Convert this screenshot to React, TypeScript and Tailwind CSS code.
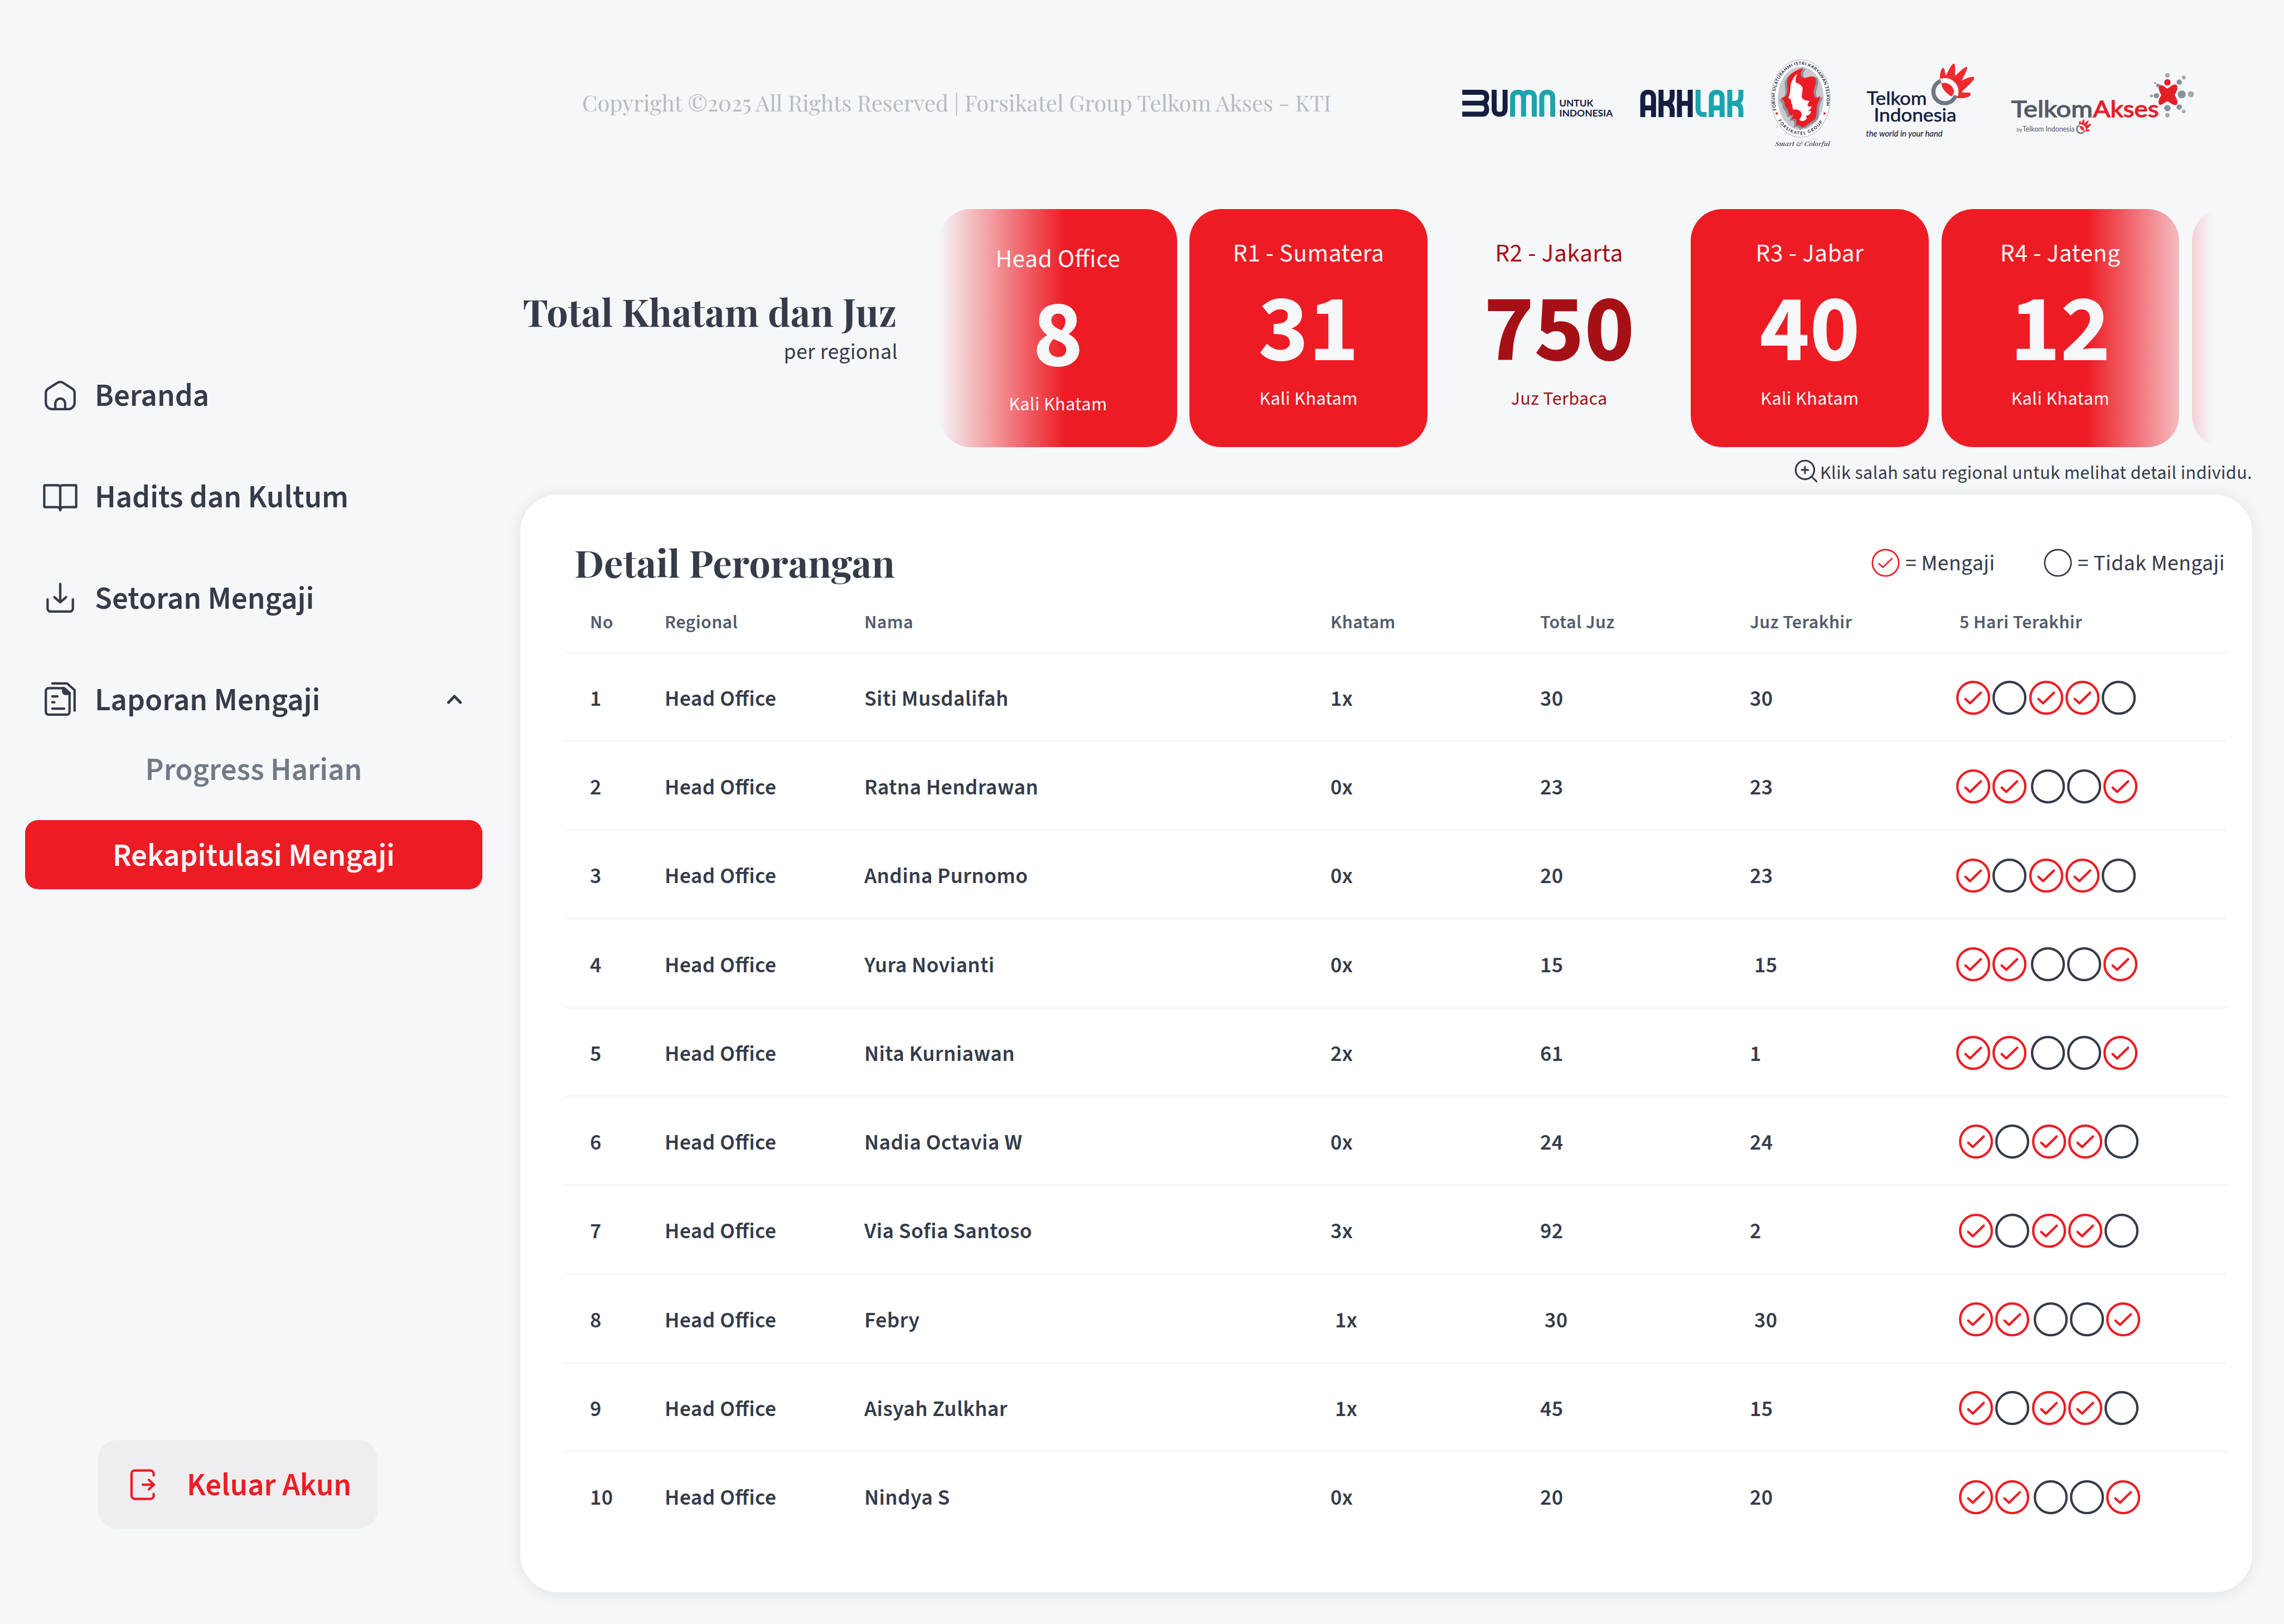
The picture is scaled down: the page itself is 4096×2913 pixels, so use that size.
import type { ReactNode } from "react";

type Day = 0 | 1;

type Row = {
  name: string;
  khatam: string;
  total: string;
  last: string;
  days: Day[];
  nudgeKhatam?: boolean;
  nudgeTotal?: boolean;
  nudgeLast?: boolean;
};

const A: Day[] = [1, 0, 1, 1, 0];
const B: Day[] = [1, 1, 0, 0, 1];

const rows: Row[] = [
  { name: "Siti Musdalifah", khatam: "1x", total: "30", last: "30", days: A },
  { name: "Ratna Hendrawan", khatam: "0x", total: "23", last: "23", days: B },
  { name: "Andina Purnomo", khatam: "0x", total: "20", last: "23", days: A },
  { name: "Yura Novianti", khatam: "0x", total: "15", last: "15", days: B, nudgeLast: true },
  { name: "Nita Kurniawan", khatam: "2x", total: "61", last: "1", days: B },
  { name: "Nadia Octavia W", khatam: "0x", total: "24", last: "24", days: A },
  { name: "Via Sofia Santoso", khatam: "3x", total: "92", last: "2", days: A },
  { name: "Febry", khatam: "1x", total: "30", last: "30", days: B, nudgeKhatam: true, nudgeTotal: true, nudgeLast: true },
  { name: "Aisyah Zulkhar", khatam: "1x", total: "45", last: "15", days: A, nudgeKhatam: true },
  { name: "Nindya S", khatam: "0x", total: "20", last: "20", days: B },
];

const cards = [
  { region: "Head Office", value: "8", unit: "Kali Khatam", first: true },
  { region: "R1 - Sumatera", value: "31", unit: "Kali Khatam" },
  { region: "R2 - Jakarta", value: "750", unit: "Juz Terbaca", active: true },
  { region: "R3 - Jabar", value: "40", unit: "Kali Khatam" },
  { region: "R4 - Jateng", value: "12", unit: "Kali Khatam" },
  { region: "", value: "", unit: "" },
];

const COLS = "grid grid-cols-[134px_358px_836px_376px_376px_376px_1fr] pl-[45px]";

function Icon({ children, width = 1.5 }: { children: ReactNode; width?: number }) {
  return (
    <svg
      className="h-[68px] w-[68px] shrink-0"
      viewBox="0 0 24 24"
      fill="none"
      stroke="currentColor"
      strokeWidth={width}
      strokeLinecap="round"
      strokeLinejoin="round"
    >
      {children}
    </svg>
  );
}

const HomeIcon = () => (
  <Icon>
    <path d="M2.9 10.2C2.9 8.8 3.4 8 4.6 7.3L10.1 3.8C11.3 3.1 12.7 3.1 13.9 3.8L19.4 7.3C20.6 8 21.1 8.8 21.1 10.2V16.4A4 4 0 0 1 17.1 20.4H6.9A4 4 0 0 1 2.9 16.4Z" />
    <path d="M8.9 20.2V16.8A3.1 3.1 0 0 1 15.1 16.8V20.2" />
  </Icon>
);

const BookIcon = () => (
  <Icon>
    <path d="M12 5.2C11.6 4.6 11 4.4 10.2 4.4H2.3A.4.4 0 0 0 1.9 4.8V17.8A.4.4 0 0 0 2.3 18.2H10.2C11.2 18.2 11.7 18.8 12 20.2C12.3 18.8 12.8 18.2 13.8 18.2H21.7A.4.4 0 0 0 22.1 17.8V4.8A.4.4 0 0 0 21.7 4.4H13.8C13 4.4 12.4 4.6 12 5.2ZV19.6" />
  </Icon>
);

const DownloadIcon = () => (
  <Icon>
    <path d="M4 12.4V18.2A1.9 1.9 0 0 0 5.9 20.1H18.1A1.9 1.9 0 0 0 20 18.2V12.4" />
    <path d="M12 2.6V14.3M8.3 11L12 14.3L15.7 11" />
  </Icon>
);

const ReportIcon = () => (
  <Icon>
    <path d="M7 1.4H16.4L21.1 5.6V18.6" />
    <path d="M4.6 4.4H14.4L17.9 7.4V19.4A1.7 1.7 0 0 1 16.2 21.1H4.6A1.7 1.7 0 0 1 2.9 19.4V6.1A1.7 1.7 0 0 1 4.6 4.4Z" />
    <path d="M13.9 4.4H14.4L17.9 7.4V8H15.4A1.5 1.5 0 0 1 13.9 6.5Z" fill="currentColor" />
    <path d="M7 9.6H10.2M7 13.3H8.3M7 17.3H14.5" />
  </Icon>
);

const LogoutIcon = () => (
  <Icon>
    <path d="M18.9 6.2V5A2 2 0 0 0 16.9 3H6.9A2 2 0 0 0 4.9 5V19A2 2 0 0 0 6.9 21H16.9A2 2 0 0 0 18.9 19V17.9" />
    <path d="M12 12H18.9M15.9 9L19.1 12L15.9 15" />
  </Icon>
);

function DayMark({ done, className }: { done: boolean; className: string }) {
  return (
    <svg
      className={className}
      viewBox="0 0 61 61"
      fill="none"
      stroke={done ? "#ed1c24" : "#353b49"}
      strokeLinecap="round"
      strokeLinejoin="round"
    >
      <circle cx="30.5" cy="30.5" r="28.3" />
      {done && <path d="M16.6 32.6L24.8 40.2L44.2 21.4" />}
    </svg>
  );
}

function LetterA({ x }: { x: number }) {
  return <path d="M13 147V42Q13 13 41 13Q69 13 69 42V147M13 98H69" transform={`translate(${x} 63)`} />;
}

function LetterK({ x }: { x: number }) {
  return (
    <path
      d="M13 0V147M71 0V32Q71 73 36 73H15M36 73Q71 75 71 112V147"
      transform={`translate(${x} 63)`}
    />
  );
}

function BumnLogo() {
  return (
    <svg className="h-[51px] w-[272px] shrink-0" viewBox="22 20 272 51">
      <g transform="scale(.34436 .33333)" fill="none" strokeWidth="26">
        <path
          fill="#151d40"
          d="M65 63H168Q205 66 205 103Q205 122 194 135Q205 150 205 170Q203 208 166 208H65V181H165Q180 180 180 164Q180 148 165 148H65V122H165Q180 121 180 106Q180 91 166 90H65Z"
        />
        <path stroke="#151d40" d="M231 63V166Q231 195 260 195Q288 195 288 166V63" />
        <path
          stroke="#1ba3ae"
          d="M327 208V105Q327 76 355 76Q383 76 384 105V208M384 105Q385 76 412 76Q440 76 440 105V208M479 208V105Q479 76 508 76Q536 76 536 105V208"
        />
        <g fill="#151d40" fontFamily="Lato, sans-serif" fontWeight="700" fontSize="53">
          <text x="570" y="153" textLength="177" lengthAdjust="spacingAndGlyphs">UNTUK</text>
          <text x="570" y="207" textLength="279" lengthAdjust="spacingAndGlyphs">INDONESIA</text>
        </g>
      </g>
    </svg>
  );
}

function AkhlakLogo() {
  return (
    <svg className="h-[51px] w-[187px] shrink-0" viewBox="341 20 187 51">
      <g transform="scale(.34436 .33333)" fill="none" strokeWidth="26">
        <g stroke="#151d40">
          <LetterA x={992} />
          <LetterK x={1087} />
          <path d="M1196 63V210M1252 63V210M1196 136H1252" />
        </g>
        <g stroke="#1ba3ae">
          <path d="M1293 63V165Q1293 196 1320 196H1337" />
          <LetterA x={1349} />
          <LetterK x={1445} />
        </g>
      </g>
    </svg>
  );
}

function ForsikatelLogo() {
  const flame =
    "M225 78C200 84 150 100 136 142C130 168 142 190 136 214C130 232 116 238 100 242C118 250 122 262 124 284C132 296 140 300 146 330C152 336 160 336 168 324C166 340 160 350 156 358C168 352 176 350 184 358C186 370 184 380 182 388C194 384 208 386 218 402C238 384 262 374 286 352C296 330 290 300 298 272C304 256 312 244 314 228C304 236 296 240 290 242C282 230 274 218 278 200C284 176 296 150 284 128C266 120 240 130 226 134C206 126 200 104 225 78Z";
  return (
    <svg className="h-[162px] w-[109.3px] shrink-0" viewBox="45 28 328 486">
      <defs>
        <path id="arc-top" d="M78 305A139 180 0 1 1 338 305" />
        <path id="arc-bottom" d="M86 362A155 198 0 0 0 330 362" />
      </defs>
      <ellipse cx="208" cy="243" rx="159" ry="209" fill="#fff" stroke="#9a9eaa" strokeWidth="2.5" />
      <ellipse cx="208" cy="242" rx="124" ry="170" fill="#c8cacf" />
      <path d={flame} fill="#8d9099" transform="translate(-12 10)" />
      <path d={flame} fill="#8d9099" transform="translate(13 4)" />
      <path d={flame} fill="#ed1c24" />
      <path
        fill="#fff"
        d="M190 110C168 126 152 160 152 190C152 215 145 228 141 240L154 246L157 265C158 275 165 272 163 286L167 303L182 302C200 304 213 312 213 330C212 345 198 350 204 360C215 368 238 364 240 346L234 334C248 338 260 330 264 310L244 311C256 306 264 298 266 284C250 294 234 280 256 258C244 252 222 258 214 236C212 222 220 205 217 182C204 162 190 162 182 156C178 140 182 128 190 110Z"
      />
      <circle cx="79" cy="324" r="6.5" fill="#ed1c24" />
      <circle cx="336" cy="324" r="6.5" fill="#ed1c24" />
      <g fill="#151d40" fontFamily="Lato, sans-serif" fontWeight="700" fontSize="23">
        <text textLength="608">
          <textPath href="#arc-top" textLength="608">FORUM SILATURAHMI ISTRI KARYAWAN TELKOM</textPath>
        </text>
        <text textLength="292">
          <textPath href="#arc-bottom" textLength="292">FORSIKATEL GROUP</textPath>
        </text>
      </g>
      <text
        x="70"
        y="498"
        fill="#151d40"
        fontFamily="'Playfair Display', 'Liberation Serif', serif"
        fontStyle="italic"
        fontSize="34"
        textLength="296"
        lengthAdjust="spacingAndGlyphs"
      >
        Smart &amp; Colorful
      </text>
    </svg>
  );
}

function TelkomHand() {
  return (
    <>
      <path
        fill="#ee2a31"
        d="M149 41C149 32 150.5 24 154 22C157 21 157.5 26 159.3 36C163 30 167 19 172.5 14.5C176 13.5 177 18 175.8 36C183 31 189 23 196 20C200 20 198 25 187.6 45C194 42 203 37 209.5 38C213 41 207 47 187.6 65C193 67 199 65 203 66.5C206 70 203 75 190 76C186 76.3 182 76 176 75.5C180 60 168 46 149 41Z"
      />
      <circle cx="157.8" cy="64.5" r="20.6" fill="none" stroke="#6f7684" strokeWidth="7.4" />
      <path d="M150.6 45.2A20.6 20.6 0 0 1 177.3 71.2" fill="none" stroke="#fff" strokeWidth="7.8" />
      <path
        fill="#ee2a31"
        d="M151.3 49.4C163 46 174 55 174 64.5C174 68 172 71 169.8 73C159 67 152.5 58 151.3 49.4Z"
      />
    </>
  );
}

function TelkomLogo() {
  return (
    <svg className="h-[151px] w-[200px] shrink-0" viewBox="15 10 200 151">
      <TelkomHand />
      <g fill="#151d40" stroke="#151d40" strokeWidth=".6" fontFamily="Lato, sans-serif">
        <text x="17.5" y="88" fontSize="33" textLength="108" lengthAdjust="spacingAndGlyphs">Telkom</text>
        <text x="30.5" y="117.5" fontSize="33" textLength="148" lengthAdjust="spacingAndGlyphs">Indonesia</text>
        <text x="16.5" y="144.5" fontSize="15.5" fontStyle="italic" strokeWidth=".2" textLength="137" lengthAdjust="spacingAndGlyphs">
          the world in your hand
        </text>
      </g>
    </svg>
  );
}

const sparks: [number, number, number, string][] = [
  [556.9, 35, 4, "#a5a9b1"],
  [556.9, 94, 5.8, "#8b919b"],
  [556.9, 106.7, 4, "#a5a9b1"],
  [578.1, 47.3, 4.8, "#8b919b"],
  [586.2, 39, 3.4, "#a5a9b1"],
  [582.6, 69.4, 7.2, "#8b919b"],
  [599, 69, 5.6, "#a5a9b1"],
  [578, 92, 4.8, "#8b919b"],
  [586, 99.7, 3.3, "#a5a9b1"],
  [540, 53.3, 3.2, "#8b919b"],
  [535, 49, 2, "#a5a9b1"],
  [537.2, 71.7, 4.8, "#8b919b"],
  [528.3, 72, 2.8, "#a5a9b1"],
];

function TelkomAksesLogo() {
  return (
    <svg className="h-[111px] w-[330px] shrink-0" viewBox="275 30 330 111">
      {sparks.map(([cx, cy, r, fill]) => (
        <circle key={`${cx}-${cy}`} cx={cx} cy={cy} r={r} fill={fill} />
      ))}
      <circle cx="556.9" cy="47.7" r="5.8" fill="#e32028" />
      <path
        fill="#e32028"
        d="M543 53.5C547 50.5 552 56 557 59C562 56 567 50 573 52C577 56 574 63 570 70.5C574 77 577 84 573.5 88C568 90.5 562 84 557 81.5C551 84 546 90 542 87.5C539.5 83 542 77 546 70.5C542 63 539.5 57 543 53.5Z"
      />
      <g fontFamily="Lato, sans-serif">
        <g fontSize="40.5" strokeWidth="1.3">
          <text x="277" y="109.5" fill="#555c68" stroke="#555c68" textLength="146" lengthAdjust="spacingAndGlyphs">Telkom</text>
          <text x="423.5" y="109.5" fill="#e32028" stroke="#e32028" textLength="118" lengthAdjust="spacingAndGlyphs">Akses</text>
        </g>
        <g fill="#555c68">
          <text x="286.5" y="135.5" fontSize="9.5">by</text>
          <text x="297" y="136" fontSize="12.8" textLength="93.5" lengthAdjust="spacingAndGlyphs">Telkom Indonesia</text>
        </g>
      </g>
      <g transform="translate(345.5 108.8) scale(.355)">
        <TelkomHand />
      </g>
    </svg>
  );
}

function NavItem({ icon, label, children }: { icon: ReactNode; label: string; children?: ReactNode }) {
  return (
    <a className="flex h-[182px] items-center gap-[28px] pr-[16px] pl-[29px]">
      {icon}
      <span className="flex-1 pt-[2px]">{label}</span>
      {children}
    </a>
  );
}

function Sidebar() {
  return (
    <aside className="flex w-[910px] shrink-0 flex-col px-[45px] pt-[619px] pb-[171px] text-[56.9px] leading-[72px] font-semibold">
      <nav className="flex flex-col">
        <NavItem icon={<HomeIcon />} label="Beranda" />
        <NavItem icon={<BookIcon />} label="Hadits dan Kultum" />
        <NavItem icon={<DownloadIcon />} label="Setoran Mengaji" />
        <NavItem icon={<ReportIcon />} label="Laporan Mengaji">
          <Icon width={1.7}>
            <path d="M8.2 13.5L12 9.5L15.8 13.5" />
          </Icon>
        </NavItem>
        <a className="flex h-[68px] items-center justify-center pt-[2px] text-[#727987]">Progress Harian</a>
        <a className="mt-[56px] flex h-[124px] items-center justify-center rounded-[23px] bg-[#ed1c24] pt-[5px] text-[#f6f7f9]">
          Rekapitulasi Mengaji
        </a>
      </nav>
      <button className="mt-auto ml-[131px] flex h-[159px] w-[501px] items-center gap-[45px] rounded-[34px] bg-[#eeeef0] pl-[46px] text-[#ed1c24]">
        <LogoutIcon />
        <span className="pt-[4px]">Keluar Akun</span>
      </button>
    </aside>
  );
}

function RegionCard({ region, value, unit, active, first }: { region: string; value: string; unit: string; active?: boolean; first?: boolean }) {
  return (
    <div
      className={[
        "flex w-[426.7px] shrink-0 flex-col items-center rounded-[57px]",
        active ? "text-[#a51016]" : "bg-[#ed1c24] text-[#f6f7f9]",
        first ? "pt-[61px]" : "pt-[51px]",
      ].join(" ")}
    >
      <span className="text-[45.5px] leading-[57px] tracking-[0.5px]">{region}</span>
      <span className="mt-[9px] text-[170.7px] leading-[202px] font-bold">{value}</span>
      <span className="text-[34.1px] leading-[43px] tracking-[0.4px]">{unit}</span>
    </div>
  );
}

function Summary() {
  return (
    <section className="flex h-[427px] gap-[75px]">
      <div className="flex w-[698px] shrink-0 flex-col items-end pt-[137px]">
        <h1 className="font-['Playfair_Display','Liberation_Serif',serif] text-[68.1px] leading-[92px] font-bold whitespace-nowrap">
          Total Khatam dan Juz
        </h1>
        <p className="mt-[3px] -mr-[2px] text-[39.8px] leading-[50px] tracking-[0.4px]">per regional</p>
      </div>
      <div className="relative w-[2286px] overflow-hidden">
        <div className="flex h-full gap-[22.7px] pl-[1px]">
          {cards.map((card, i) => (
            <RegionCard key={i} {...card} />
          ))}
        </div>
        <div className="absolute inset-y-0 left-0 w-[227px] bg-linear-to-r from-[#f6f7f9] to-[#f6f7f9]/0" />
        <div className="absolute inset-y-0 right-0 w-[227px] bg-linear-to-l from-[#f6f7f9] to-[#f6f7f9]/0" />
      </div>
    </section>
  );
}

function Hint() {
  return (
    <div className="mt-[22px] mr-[57px] flex h-[49px] items-start justify-end text-[34.1px] leading-[50px] tracking-[0.4px]">
      <svg
        className="-mt-[4px] h-[50px] w-[50px]"
        viewBox="0 0 24 24"
        fill="none"
        stroke="currentColor"
        strokeWidth="1.5"
        strokeLinecap="round"
      >
        <circle cx="11" cy="11" r="8" />
        <path d="M16.8 16.8L21 21M11 8.2V13.8M8.2 11H13.8" />
      </svg>
      <span>Klik salah satu regional untuk melihat detail individu.</span>
    </div>
  );
}

function DetailPanel() {
  return (
    <section className="mt-[14px] ml-[23px] h-[1969px] w-[3106px] rounded-[68px] bg-white pt-[75px] shadow-[0_3px_28px_rgba(0,0,0,0.09)]">
      <div className="flex h-[91px] items-center justify-between pr-[49px] pl-[97px]">
        <h2 className="font-['Playfair_Display','Liberation_Serif',serif] text-[68.3px] leading-[91px] font-bold">
          Detail Perorangan
        </h2>
        <div className="flex items-center gap-[87px] pt-[4px] text-[39.8px] leading-[50px] tracking-[0.4px]">
          <div className="flex items-center gap-[10px]">
            <DayMark done className="h-[51px] w-[51px] stroke-[3.2px]" />
            <span className="pt-[2px]">= Mengaji</span>
          </div>
          <div className="flex items-center gap-[10px]">
            <DayMark done={false} className="h-[51px] w-[51px] stroke-[3.2px]" />
            <span className="pt-[2px]">= Tidak Mengaji</span>
          </div>
        </div>
      </div>

      <div className="mt-[13px] mr-[46px] ml-[80px] font-semibold tracking-[0.4px]">
        <div className={`${COLS} h-[105.5px] items-center border-b-[3px] border-[#f6f6f8] text-[34.1px] leading-[44px] text-[#555d6b]`}>
          <span>No</span>
          <span>Regional</span>
          <span>Nama</span>
          <span>Khatam</span>
          <span>Total Juz</span>
          <span>Juz Terakhir</span>
          <span>5 Hari Terakhir</span>
        </div>
        {rows.map((row, i) => (
          <div
            key={row.name}
            className={`${COLS} h-[159.3px] items-center pt-[8px] text-[39.8px] leading-[50px] ${
              i < rows.length - 1 ? "border-b-[3px] border-[#f6f6f8]" : "pb-[3px]"
            }`}
          >
            <span>{i + 1}</span>
            <span>Head Office</span>
            <span>{row.name}</span>
            <span className={row.nudgeKhatam ? "pl-[8px]" : ""}>{row.khatam}</span>
            <span className={row.nudgeTotal ? "pl-[8px]" : ""}>{row.total}</span>
            <span className={row.nudgeLast ? "pl-[8px]" : ""}>{row.last}</span>
            <div className={`-mt-[4px] flex gap-[4px] ${i < 5 ? "-ml-[6px]" : "-ml-[1px]"}`}>
              {row.days.map((d, j) => (
                <DayMark
                  key={j}
                  done={d === 1}
                  className={
                    j === 2 && row.days === B
                      ? "ml-[3px] h-[61.3px] w-[61.3px] shrink-0 stroke-[4.2px]"
                      : "h-[61.3px] w-[61.3px] shrink-0 stroke-[4.2px]"
                  }
                />
              ))}
            </div>
          </div>
        ))}
      </div>
    </section>
  );
}

export default function App() {
  return (
    <div className="flex h-[2913px] w-[4096px] overflow-hidden bg-[#f6f7f9] font-['Source_Sans_3','Noto_Sans_CJK_SC',sans-serif] text-[#353b49] [font-feature-settings:'liga'_1]">
      <Sidebar />
      <main className="flex flex-1 flex-col">
        <header className="flex h-[375px] items-center pr-[161px] pb-[4px] pl-[134px]">
          <p className="mr-auto pb-[3px] font-['Playfair_Display','Liberation_Serif',serif] text-[39.85px] leading-[54px] whitespace-nowrap text-[#b7bbc3]">
            Copyright ©2025 All Rights Reserved | Forsikatel Group Telkom Akses - KTI
          </p>
          <BumnLogo />
          <div className="ml-[47px] flex">
            <AkhlakLogo />
          </div>
          <div className="ml-[47px] flex">
            <ForsikatelLogo />
          </div>
          <div className="ml-[61px] flex">
            <TelkomLogo />
          </div>
          <div className="ml-[60px] flex">
            <TelkomAksesLogo />
          </div>
        </header>
        <Summary />
        <Hint />
        <DetailPanel />
      </main>
    </div>
  );
}
